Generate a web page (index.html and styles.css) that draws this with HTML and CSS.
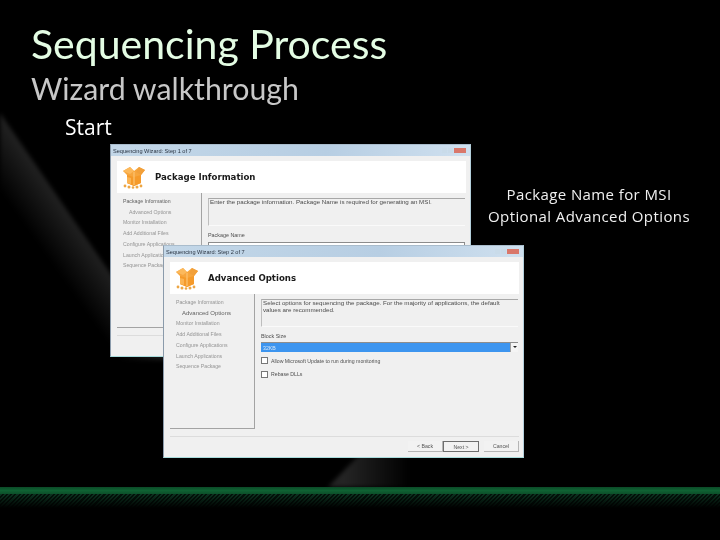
FILE: index.html
```html
<!DOCTYPE html>
<html>
<head>
  <title>Sequencing Process</title>
  <link rel="stylesheet" href="styles.css">
</head>
<body>
  <svg class="hidden-defs" width="0" height="0">
    <symbol id="box" viewBox="0 0 24 24">
      <path d="M1 6 L8 2 L12 6 L17 2 L23 5 L19 10 L19 18 L12 21 L5 18 L5 10 Z" fill="#f7a63e"/>
      <path d="M5 10 L12 12 L19 10 L19 18 L12 21 L5 18 Z" fill="#f59a2a"/>
      <path d="M12 7 L12 20" stroke="#fbbf6a" stroke-width="1.4"/>
      <path d="M1 6 L8 2 L12 6 L8 9 Z" fill="#fcb95c"/>
      <path d="M17 2 L23 5 L19 10 L14 7 Z" fill="#f2a03a"/>
      <path d="M5 12 L9 13 L9 19 L5 18 Z" fill="#fbb454"/>
      <circle cx="3" cy="21" r="1.4" fill="#eda644"/>
      <circle cx="7" cy="22" r="1.5" fill="#eda644"/>
      <circle cx="11" cy="22.5" r="1.3" fill="#eda644"/>
      <circle cx="15" cy="22" r="1.5" fill="#eda644"/>
      <circle cx="19" cy="21" r="1.4" fill="#eda644"/>
    </symbol>
  </svg>

  <div class="slide">
    <svg class="streak" width="720" height="540" viewBox="0 0 720 540">
      <defs>
        <linearGradient id="streak-fill" gradientUnits="userSpaceOnUse" x1="60" y1="180" x2="15" y2="212">
          <stop offset="0" stop-color="#2a2a2a"/>
          <stop offset="1" stop-color="#000"/>
        </linearGradient>
        <linearGradient id="wedge-fill" gradientUnits="userSpaceOnUse" x1="345" y1="470" x2="410" y2="470">
          <stop offset="0" stop-color="#242424"/>
          <stop offset="1" stop-color="#000"/>
        </linearGradient>
      </defs>
      <path d="M0 113 L170 360 L120 360 L0 190 Z" fill="url(#streak-fill)"/>
      <path d="M362 452 L328 487 L420 487 L420 452 Z" fill="url(#wedge-fill)"/>
    </svg>

    <h1 class="title">Sequencing Process</h1>
    <h2 class="subtitle">Wizard walkthrough</h2>
    <div class="start">Start</div>

    <div class="side-note">
      <div>Package Name for MSI</div>
      <div>Optional Advanced Options</div>
    </div>

    <!-- first wizard window -->
    <div class="win win-one">
      <div class="win-title">
        <span>Sequencing Wizard: Step 1 of 7</span>
        <span class="win-btns"><i></i><i></i><i class="close"></i></span>
      </div>
      <div class="win-head">
        <svg class="box-icon"><use href="#box"/></svg>
        <div class="win-heading">Package Information</div>
      </div>
      <div class="win-main">
        <div class="win-nav">
          <div class="on">Package Information</div>
          <div class="sub">Advanced Options</div>
          <div>Monitor Installation</div>
          <div>Add Additional Files</div>
          <div>Configure Applications</div>
          <div>Launch Applications</div>
          <div>Sequence Package</div>
        </div>
        <div class="win-content">
          <div class="desc">Enter the package information. Package Name is required for generating an MSI.</div>
          <div class="field-label">Package Name</div>
          <div class="text-input"></div>
        </div>
      </div>
      <div class="win-foot"></div>
    </div>

    <!-- second wizard window -->
    <div class="win win-two">
      <div class="win-title">
        <span>Sequencing Wizard: Step 2 of 7</span>
        <span class="win-btns"><i></i><i></i><i class="close"></i></span>
      </div>
      <div class="win-head">
        <svg class="box-icon"><use href="#box"/></svg>
        <div class="win-heading">Advanced Options</div>
      </div>
      <div class="win-main">
        <div class="win-nav">
          <div>Package Information</div>
          <div class="sub on">Advanced Options</div>
          <div>Monitor Installation</div>
          <div>Add Additional Files</div>
          <div>Configure Applications</div>
          <div>Launch Applications</div>
          <div>Sequence Package</div>
        </div>
        <div class="win-content">
          <div class="desc">Select options for sequencing the package.  For the majority of applications, the default values are recommended.</div>
          <div class="field-label">Block Size</div>
          <div class="select-box">
            <span>32KB</span>
            <span class="select-arrow"></span>
          </div>
          <div class="check-row"><span class="check"></span>Allow Microsoft Update to run during monitoring</div>
          <div class="check-row"><span class="check"></span>Rebase DLLs</div>
        </div>
      </div>
      <div class="win-foot">
        <span class="btn">&lt; Back</span>
        <span class="btn btn-default">Next &gt;</span>
        <span class="btn btn-cancel">Cancel</span>
      </div>
    </div>

    <div class="footer-band"></div>
    <div class="footer-hatch"></div>
  </div>
</body>
</html>
```

FILE: styles.css
```css
body {
  margin: 0;
  background: #000;
  font-family: "Open Sans", sans-serif;
}

.hidden-defs {
  position: absolute;
}

.slide {
  position: relative;
  width: 720px;
  height: 540px;
  overflow: hidden;
  background: #000;
  padding: 18px 0 0 31px;
  box-sizing: border-box;
}

.streak {
  position: absolute;
  left: 0;
  top: 0;
  filter: blur(2px);
}

.title {
  position: relative;
  margin: 0;
  font-family: Lato, sans-serif;
  font-weight: 400;
  font-size: 41px;
  line-height: 52px;
  color: #e4fde4;
  filter: blur(0.2px);
}

.subtitle {
  position: relative;
  margin: 0;
  font-family: Lato, sans-serif;
  font-weight: 400;
  font-size: 30.3px;
  line-height: 37px;
  color: #c8c8c8;
  filter: blur(0.2px);
}

.start {
  position: relative;
  margin: 6px 0 0 34px;
  font-size: 21px;
  line-height: 28px;
  color: #fff;
  filter: blur(0.2px);
}

.side-note {
  position: absolute;
  left: 459px;
  top: 183px;
  width: 260px;
  text-align: center;
  font-size: 15px;
  line-height: 22px;
  letter-spacing: 0.4px;
  color: #f0f0f0;
  filter: blur(0.2px);
}

/* wizard windows */
.win {
  position: absolute;
  width: 361px;
  height: 213px;
  box-sizing: border-box;
  display: flex;
  flex-direction: column;
  background: #f0f0f0;
  border: 1px solid #8b9bab;
  border-top-color: #a9bccc;
  border-right-color: #b4d0dc;
  border-bottom-color: #a8dcdc;
  color: #555;
  font-family: "Liberation Sans", sans-serif;
  font-size: 5.2px;
  filter: blur(0.25px);
}

.win-one {
  left: 110px;
  top: 144px;
}

.win-two {
  left: 163px;
  top: 245px;
}

.win-title {
  height: 11px;
  flex: none;
  display: flex;
  justify-content: space-between;
  align-items: center;
  padding: 0 4px 0 2px;
  background: linear-gradient(to right, #c3d7e8, #b7cee3 60%, #cfe0ef);
  color: #2a3442;
  font-size: 5.6px;
}

.win-btns {
  display: flex;
  gap: 1px;
}

.win-btns i {
  display: block;
  width: 5px;
  height: 5px;
  background: #c9dbe9;
}

.win-btns .close {
  width: 12px;
  background: #d9776a;
}

.win-head {
  flex: none;
  height: 32px;
  box-sizing: border-box;
  margin: 5px 4px 0 6px;
  background: #fff;
  display: flex;
  align-items: center;
  padding: 0 0 1px 5px;
  gap: 9px;
}

.box-icon {
  width: 24px;
  height: 24px;
}

.win-heading {
  font-family: "DejaVu Sans", sans-serif;
  font-weight: 700;
  font-size: 8.6px;
  color: #1a1a1a;
}

.win-main {
  flex: none;
  height: 135px;
  display: flex;
  margin: 0 4px 0 6px;
}

.win-nav {
  width: 85px;
  flex: none;
  box-sizing: border-box;
  padding: 3px 0 0 6px;
  border-right: 1px solid #a3a3a3;
  border-bottom: 1px solid #a3a3a3;
  color: #949494;
  line-height: 10.7px;
}

.win-nav .sub {
  padding-left: 6px;
}

.win-nav .on {
  color: #626262;
}

.win-nav .sub.on {
  font-size: 6px;
}

.win-content {
  flex: 1;
  padding: 5px 1px 0 6px;
}

.desc {
  height: 28px;
  box-sizing: border-box;
  padding: 0 1px;
  border-top: 1px solid #a8a8a8;
  border-left: 1px solid #bdbdbd;
  border-bottom: 1px solid #fafafa;
  font-size: 6.2px;
  line-height: 6.6px;
  color: #4a4a4a;
}

.field-label {
  margin-top: 6px;
  font-size: 5.4px;
  color: #4f4f4f;
}

.text-input {
  height: 10px;
  margin-top: 4px;
  background: #fff;
  border: 1px solid #8c8c8c;
  box-sizing: border-box;
}

.select-box {
  height: 10px;
  margin-top: 3px;
  box-sizing: border-box;
  display: flex;
  justify-content: space-between;
  align-items: center;
  padding-left: 2px;
  background: #3d95ef;
  border-top: 1px solid #8d8d8d;
  color: #d8e8f8;
}

.select-arrow {
  position: relative;
  width: 7px;
  height: 9px;
  background: #f4f4f4;
  border-left: 1px solid #a0a0a0;
}

.select-arrow::after {
  content: "";
  position: absolute;
  left: 2px;
  top: 3px;
  border: 2px solid transparent;
  border-top: 2px solid #222;
}

.check-row {
  display: flex;
  align-items: center;
  gap: 3px;
  margin-top: 4px;
  height: 9px;
  color: #4f4f4f;
}

.check-row + .check-row {
  margin-top: 4.5px;
}

.check {
  width: 5px;
  height: 5px;
  background: #fff;
  border: 1px solid #777;
}

.win-foot {
  flex: none;
  margin: 7px 4px 0 6px;
  padding-top: 4px;
  border-top: 1px solid #dcdcdc;
  display: flex;
  justify-content: flex-end;
  align-items: flex-start;
}

.btn {
  height: 11px;
  width: 35px;
  box-sizing: border-box;
  display: flex;
  align-items: center;
  justify-content: center;
  background: #f2f2f2;
  border-right: 1px solid #b5b5b5;
  border-bottom: 1px solid #b5b5b5;
  color: #555;
}

.btn-default {
  width: 36px;
  border: 1px solid #6e6e6e;
}

.btn-cancel {
  margin-left: 5px;
}

/* bottom strip */
.footer-band {
  position: absolute;
  left: 0;
  top: 487px;
  width: 720px;
  height: 7px;
  background: linear-gradient(to bottom, #0b4a27, #0f6233 50%, #0c4f2a);
}

.footer-hatch {
  position: absolute;
  left: 0;
  top: 494px;
  width: 720px;
  height: 14px;
  background: repeating-linear-gradient(135deg, #0c3320 0, #0c3320 1.5px, #03120a 1.5px, #03120a 3px);
  -webkit-mask-image: linear-gradient(to bottom, #000, transparent);
  mask-image: linear-gradient(to bottom, #000, transparent);
}
```
